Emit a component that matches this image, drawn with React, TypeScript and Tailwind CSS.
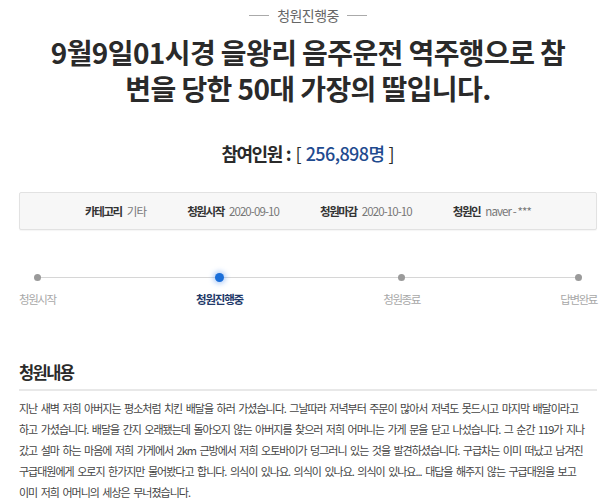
const steps = [
  { label: '청원시작', active: false },
  { label: '청원진행중', active: true },
  { label: '청원종료', active: false },
  { label: '답변완료', active: false },
];

const info = [
  { label: '카테고리', value: '기타' },
  { label: '청원시작', value: '2020-09-10' },
  { label: '청원마감', value: '2020-10-10' },
  { label: '청원인', value: 'naver - ***' },
];

export default function App() {
  return (
    <div className="min-h-screen bg-white px-[19px] font-['Noto_Sans_CJK_KR','Noto_Sans',sans-serif] text-[#333]">
      {/* 상태 */}
      <div className="flex items-center justify-center gap-[8px] pt-[5px]">
        <span className="h-px w-[20px] bg-[#aaa]" />
        <span className="text-[14px] leading-[20px] tracking-[-0.6px] text-[#666]">청원진행중</span>
        <span className="h-px w-[20px] bg-[#aaa]" />
      </div>

      {/* 제목 */}
      <h1 className="mt-[9px] text-center text-[28px] font-bold leading-[36px] tracking-[-0.6px] text-[#2a2a2a]">
        9월9일01시경 을왕리 음주운전 역주행으로 참<br />
        변을 당한 50대 가장의 딸입니다.
      </h1>

      {/* 참여인원 */}
      <div className="mt-[35px] text-center text-[18px] font-bold leading-[24px] text-[#2a2a2a]">
        <span className="tracking-[-1.5px]">참여인원</span>
        <span className="mx-[4px]">:</span>
        <span className="font-normal">[ </span>
        <span className="font-medium tracking-[-0.6px] text-[#1f4b8f]">256,898명</span>
        <span className="font-normal"> ]</span>
      </div>

      {/* 정보 박스 */}
      <div className="mt-[27px] flex h-[38px] items-center justify-center gap-[41px] rounded-[2px] border border-[#e2e2e2] bg-[#f7f7f7] shadow-[0_1px_1px_rgba(0,0,0,0.04)]">
        {info.map((item) => (
          <div key={item.label} className="flex items-center gap-[5px] text-[11.5px] leading-[16px]">
            <span className="font-bold tracking-[-1.4px] text-[#333]">{item.label}</span>
            <span className="tracking-[-0.9px] text-[#777]">{item.value}</span>
          </div>
        ))}
      </div>

      {/* 진행 단계 */}
      <div className="relative mt-[43px] flex justify-between">
        <div className="absolute left-[18px] right-[20px] top-[3.5px] h-px bg-[#d6d6d6]" />
        {steps.map((s) => (
          <div key={s.label} className="relative flex flex-col items-center">
            <div className="flex h-[8px] items-center">
              {s.active ? (
                <span className="h-[9px] w-[9px] rounded-full bg-[#1b6fd9] shadow-[0_0_5px_2px_rgba(90,150,240,0.45)]" />
              ) : (
                <span className="h-[7px] w-[7px] rounded-full bg-[#9a9a9a]" />
              )}
            </div>
            <span
              className={
                s.active
                  ? 'mt-[10px] text-[11.5px] font-bold leading-[16px] tracking-[-1.2px] text-[#1f3a6a]'
                  : 'mt-[10px] text-[11.5px] leading-[16px] tracking-[-1.4px] text-[#a8a8a8]'
              }
            >
              {s.label}
            </span>
          </div>
        ))}
      </div>

      {/* 청원내용 */}
      <h2 className="mt-[53px] border-b-2 border-[#e8e8e8] pb-[5px] text-[16.5px] font-bold leading-[24px] tracking-[-1.6px] text-[#2a2a2a]">
        청원내용
      </h2>
      <p className="mt-[7px] whitespace-nowrap text-[11px] leading-[21px] tracking-[-1px] text-[#444] [word-spacing:2px]">
        지난 새벽 저희 아버지는 평소처럼 치킨 배달을 하러 가셨습니다. 그날따라 저녁부터 주문이 많아서 저녁도 못드시고 마지막 배달이라고<br />
        하고 가셨습니다. 배달을 간지 오래됐는데 돌아오지 않는 아버지를 찾으러 저희 어머니는 가게 문을 닫고 나섰습니다. 그 순간 119가 지나<br />
        갔고 설마 하는 마음에 저희 가게에서 2km 근방에서 저희 오토바이가 덩그러니 있는 것을 발견하셨습니다. 구급차는 이미 떠났고 남겨진<br />
        구급대원에게 오로지 한가지만 물어봤다고 합니다. 의식이 있나요. 의식이 있나요. 의식이 있나요... 대답을 해주지 않는 구급대원을 보고<br />
        이미 저희 어머니의 세상은 무너졌습니다.
      </p>
    </div>
  );
}
